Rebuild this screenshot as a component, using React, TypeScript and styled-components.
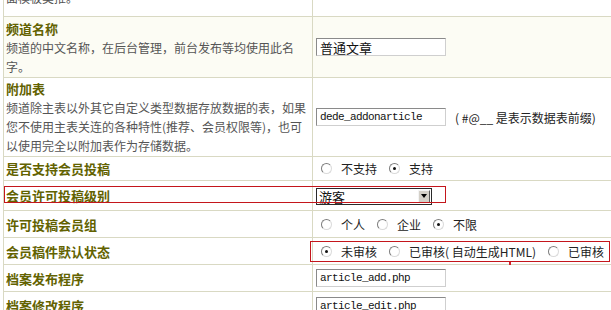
import React from "react";
import styled, { createGlobalStyle } from "styled-components";

const GlobalStyle = createGlobalStyle`
  html, body {
    margin: 0;
    padding: 0;
    background: #fff;
  }
  body {
    font-family: "Noto Sans CJK SC", "Liberation Sans", sans-serif;
    overflow: hidden;
  }
`;

const Page = styled.div`
  width: 611px;
  height: 310px;
  overflow: hidden;
  padding-left: 3px;
  box-sizing: border-box;
`;

const Table = styled.div`
  border-left: 1px solid #d9d9c3;
`;

const Row = styled.div<{ $h: number; $bg?: string }>`
  position: relative;
  display: grid;
  grid-template-columns: 309px 1fr;
  height: ${(p) => p.$h}px;
  border-bottom: 1px solid #d9d9c3;
  background: ${(p) => p.$bg || "#fff"};
  box-sizing: border-box;
`;

const Label = styled.div<{ $top?: number }>`
  display: flex;
  flex-direction: column;
  justify-content: ${(p) => (p.$top !== undefined ? "flex-start" : "center")};
  padding-top: ${(p) => p.$top || 0}px;
  padding-left: 2px;
  border-right: 1px solid #d9d9c3;
  overflow: hidden;
`;

const Title = styled.div`
  font-size: 13px;
  font-weight: bold;
  line-height: 19px;
  color: #626200;
  white-space: nowrap;
`;

const Desc = styled.div<{ $shift?: number }>`
  font-size: 12px;
  line-height: 19px;
  color: #555;
  white-space: nowrap;
  margin-top: ${(p) => p.$shift || 0}px;
`;

const Value = styled.div<{ $top?: number }>`
  display: flex;
  align-items: ${(p) => (p.$top !== undefined ? "flex-start" : "center")};
  padding-top: ${(p) => p.$top || 0}px;
  padding-left: 3px;
  white-space: nowrap;
  font-size: 12px;
  color: #222;
`;

const TextBox = styled.input<{ $mono?: boolean }>`
  width: 130px;
  height: 18px;
  box-sizing: border-box;
  margin: 0;
  padding: 0 3px;
  border: 1px solid;
  border-color: #8a8a8a #cfcfcf #cfcfcf #8a8a8a;
  background: #fff;
  color: #111;
  outline: none;
  font-family: ${(p) =>
    p.$mono ? `"Liberation Mono", monospace` : `"Noto Sans CJK SC", sans-serif`};
  font-size: ${(p) => (p.$mono ? "11px" : "13px")};
  letter-spacing: ${(p) => (p.$mono ? "-0.6px" : "0")};
`;

const Note = styled.span`
  margin-left: 9px;
  font-size: 12px;
  color: #222;
`;

const Select = styled.div`
  display: flex;
  align-items: center;
  justify-content: space-between;
  width: 116px;
  height: 17px;
  box-sizing: border-box;
  margin-top: 1px;
  border: 1px solid #2a2a2a;
  padding-left: 2px;
  background: #fff;
  font-size: 13px;
  color: #111;
`;

const SelectButton = styled.span`
  display: flex;
  align-items: center;
  justify-content: center;
  width: 12px;
  height: 13px;
  margin-right: 1px;
  box-sizing: border-box;
  background: #d4d0c8;
  border: 1px solid;
  border-color: #f4f4f4 #5a5a5a #5a5a5a #f4f4f4;
`;

const Arrow = styled.span`
  width: 0;
  height: 0;
  border-left: 3.5px solid transparent;
  border-right: 3.5px solid transparent;
  border-top: 4px solid #000;
`;

const RadioGroup = styled.div`
  display: flex;
  align-items: center;
  padding-left: 5px;
`;

const RadioItem = styled.label`
  display: flex;
  align-items: center;
  margin-right: 12px;
  font-size: 12px;
  color: #222;
`;

const Circle = styled.span<{ $on?: boolean }>`
  position: relative;
  width: 11px;
  height: 11px;
  box-sizing: border-box;
  margin-right: 9px;
  border-radius: 50%;
  border: 1px solid;
  border-color: #7d7d7d #dadada #dadada #7d7d7d;
  background: #fff;
  &::after {
    content: "";
    display: ${(p) => (p.$on ? "block" : "none")};
    position: absolute;
    left: 3px;
    top: 3px;
    width: 3px;
    height: 3px;
    border-radius: 50%;
    background: #111;
  }
`;

const Highlight = styled.div<{ $l: number; $t: number; $w: number; $h: number }>`
  position: absolute;
  left: ${(p) => p.$l}px;
  top: ${(p) => p.$t}px;
  width: ${(p) => p.$w}px;
  height: ${(p) => p.$h}px;
  box-sizing: border-box;
  border: 1px solid #c4161c;
  pointer-events: none;
`;

const Speck = styled.div`
  position: absolute;
  left: 505px;
  top: 24px;
  width: 2px;
  height: 3px;
  background: #d0202a;
`;

type Option = { text: string; on?: boolean };

const Radios = ({ options }: { options: Option[] }) => (
  <RadioGroup>
    {options.map((o) => (
      <RadioItem key={o.text}>
        <Circle $on={o.on} />
        {o.text}
      </RadioItem>
    ))}
  </RadioGroup>
);

const App = () => {
  return (
    <Page>
      <GlobalStyle />
      <Table>
        <Row $h={17}>
          <Label $top={0}>
            <Desc $shift={-12}>面模板类推。</Desc>
          </Label>
          <Value />
        </Row>

        <Row $h={61} $bg="#fcfcf4">
          <Label>
            <Title>频道名称</Title>
            <Desc>频道的中文名称，在后台管理，前台发布等均使用此名</Desc>
            <Desc>字。</Desc>
          </Label>
          <Value>
            <TextBox defaultValue="普通文章" readOnly />
          </Value>
        </Row>

        <Row $h={79}>
          <Label>
            <Title>附加表</Title>
            <Desc>频道除主表以外其它自定义类型数据存放数据的表，如果</Desc>
            <Desc>您不使用主表关连的各种特性(推荐、会员权限等)，也可</Desc>
            <Desc>以使用完全以附加表作为存储数据。</Desc>
          </Label>
          <Value>
            <TextBox $mono defaultValue="dede_addonarticle" readOnly />
            <Note>( #@__ 是表示数据表前缀)</Note>
          </Value>
        </Row>

        <Row $h={24}>
          <Label>
            <Title>是否支持会员投稿</Title>
          </Label>
          <Value>
            <Radios options={[{ text: "不支持" }, { text: "支持", on: true }]} />
          </Value>
        </Row>

        <Row $h={30}>
          <Label>
            <Title>会员许可投稿级别</Title>
          </Label>
          <Value>
            <Select>
              游客
              <SelectButton>
                <Arrow />
              </SelectButton>
            </Select>
          </Value>
          <Highlight $l={0} $t={5} $w={442} $h={17} />
        </Row>

        <Row $h={27}>
          <Label>
            <Title>许可投稿会员组</Title>
          </Label>
          <Value>
            <Radios
              options={[{ text: "个人" }, { text: "企业" }, { text: "不限", on: true }]}
            />
          </Value>
        </Row>

        <Row $h={27}>
          <Label>
            <Title>会员稿件默认状态</Title>
          </Label>
          <Value>
            <Radios
              options={[
                { text: "未审核", on: true },
                { text: "已审核( 自动生成HTML)" },
                { text: "已审核" },
              ]}
            />
          </Value>
          <Highlight $l={306} $t={3} $w={300} $h={21} />
          <Speck />
        </Row>

        <Row $h={27}>
          <Label>
            <Title>档案发布程序</Title>
          </Label>
          <Value>
            <TextBox $mono defaultValue="article_add.php" readOnly />
          </Value>
        </Row>

        <Row $h={30}>
          <Label $top={4}>
            <Title>档案修改程序</Title>
          </Label>
          <Value $top={5}>
            <TextBox $mono defaultValue="article_edit.php" readOnly />
          </Value>
        </Row>
      </Table>
    </Page>
  );
};

export default App;
